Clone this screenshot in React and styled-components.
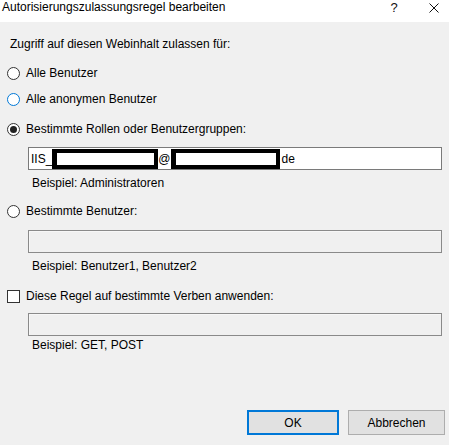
import styled, { createGlobalStyle } from "styled-components";

const GlobalStyle = createGlobalStyle`
  html, body {
    margin: 0;
    padding: 0;
    background: #f0f0f0;
  }
  body {
    font-family: "Liberation Sans", Arial, sans-serif;
    font-size: 12px;
    color: #000;
  }
`;

const Dialog = styled.div`
  width: 449px;
  height: 445px;
  display: flex;
  flex-direction: column;
  background: #f0f0f0;
  overflow: hidden;
`;

const TitleBar = styled.div`
  height: 22px;
  flex: none;
  background: #ffffff;
  display: flex;
  align-items: flex-start;
`;

const Title = styled.div`
  flex: 1;
  padding-left: 2px;
  line-height: 15px;
`;

const TitleButtons = styled.div`
  display: flex;
  gap: 10px;
`;

const TitleButton = styled.div`
  width: 30px;
  height: 15px;
  display: flex;
  align-items: center;
  justify-content: center;
  line-height: 15px;
  font-size: 13px;
  color: #111;
`;

const Body = styled.div`
  flex: 1;
  display: flex;
  flex-direction: column;
  padding: 0 7px;
`;

const Heading = styled.div`
  margin: 14px 0 0 3px;
  line-height: 16px;
`;

const OptionRow = styled.label`
  display: flex;
  align-items: center;
  gap: 6px;
  height: 16px;
  line-height: 16px;
  margin-top: ${(p) => p.$top}px;
`;

const Radio = styled.span`
  width: 13px;
  height: 13px;
  box-sizing: border-box;
  border-radius: 50%;
  border: 1px solid ${(p) => (p.$hover ? "#0078d7" : "#333333")};
  background: #ffffff;
  display: flex;
  align-items: center;
  justify-content: center;
  flex: none;

  &::after {
    content: "";
    display: ${(p) => (p.$checked ? "block" : "none")};
    width: 7px;
    height: 7px;
    border-radius: 50%;
    background: #222222;
  }
`;

const CheckBox = styled.span`
  width: 13px;
  height: 13px;
  box-sizing: border-box;
  border: 1px solid #333333;
  background: #ffffff;
  flex: none;
`;

const TextField = styled.div`
  margin: ${(p) => p.$top}px 0 0 21px;
  height: 23px;
  box-sizing: border-box;
  border: 1px solid ${(p) => (p.$disabled ? "#8a8a8a" : "#7a7a7a")};
  background: ${(p) => (p.$disabled ? "#f0f0f0" : "#ffffff")};
  box-shadow: ${(p) => (p.$disabled ? "inset 1px 1px 0 #f7f7f7" : "none")};
  display: flex;
  align-items: center;
  padding-left: 2px;
  white-space: nowrap;
  line-height: 16px;
`;

const Redacted = styled.span`
  width: ${(p) => p.$w}px;
  height: 20px;
  box-sizing: border-box;
  border: 4px solid #000;
  border-left-width: 5px;
  background: #fff;
  flex: none;
`;

const Suffix = styled.span`
  margin-left: 2px;
`;

const Hint = styled.div`
  margin: ${(p) => p.$top}px 0 0 25px;
  line-height: 16px;
`;

const Footer = styled.div`
  flex: none;
  display: flex;
  justify-content: flex-end;
  gap: 9px;
  padding: 0 4px 10px 0;
`;

const Button = styled.button`
  width: ${(p) => p.$w}px;
  height: 25px;
  box-sizing: border-box;
  background: #e1e1e1;
  border: ${(p) => (p.$default ? "2px solid #0078d7" : "1px solid #adadad")};
  font-family: "Liberation Sans", Arial, sans-serif;
  font-size: 12px;
  color: #000;
  padding: 0;
`;

const CloseIcon = () => (
  <svg width="10" height="10" viewBox="0 0 10 10">
    <path d="M0.5 0.5 L9.5 9.5 M9.5 0.5 L0.5 9.5" stroke="#111" strokeWidth="1" />
  </svg>
);

export default function App() {
  return (
    <>
      <GlobalStyle />
      <Dialog>
        <TitleBar>
          <Title>Autorisierungszulassungsregel bearbeiten</Title>
          <TitleButtons>
            <TitleButton>?</TitleButton>
            <TitleButton>
              <CloseIcon />
            </TitleButton>
          </TitleButtons>
        </TitleBar>
        <Body>
          <Heading>Zugriff auf diesen Webinhalt zulassen für:</Heading>
          <OptionRow $top={13}>
            <Radio />
            Alle Benutzer
          </OptionRow>
          <OptionRow $top={10}>
            <Radio $hover />
            Alle anonymen Benutzer
          </OptionRow>
          <OptionRow $top={14}>
            <Radio $checked />
            Bestimmte Rollen oder Benutzergruppen:
          </OptionRow>
          <TextField $top={10}>
            <span>IIS_</span>
            <Redacted $w={106} />
            <span>@</span>
            <Redacted $w={109} />
            <Suffix>de</Suffix>
          </TextField>
          <Hint $top={5}>Beispiel: Administratoren</Hint>
          <OptionRow $top={12}>
            <Radio />
            Bestimmte Benutzer:
          </OptionRow>
          <TextField $top={11} $disabled />
          <Hint $top={5}>Beispiel: Benutzer1, Benutzer2</Hint>
          <OptionRow $top={14}>
            <CheckBox />
            Diese Regel auf bestimmte Verben anwenden:
          </OptionRow>
          <TextField $top={9} $disabled />
          <Hint $top={1}>Beispiel: GET, POST</Hint>
        </Body>
        <Footer>
          <Button $w={92} $default>
            OK
          </Button>
          <Button $w={97}>Abbrechen</Button>
        </Footer>
      </Dialog>
    </>
  );
}
